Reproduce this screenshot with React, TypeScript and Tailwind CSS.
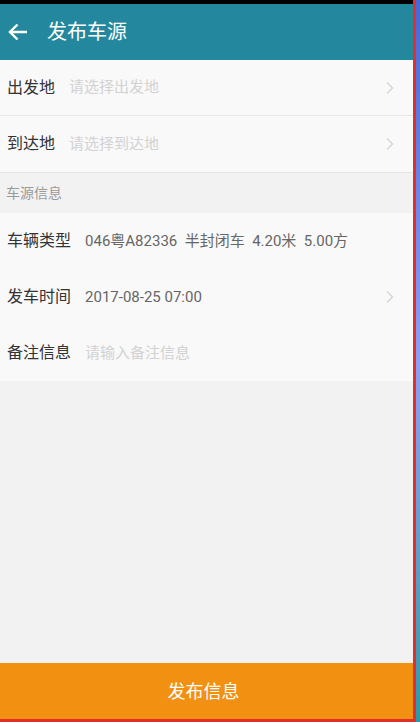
import React from "react";

const font = { fontFamily: 'Roboto, "Noto Sans CJK SC", "Noto Sans", sans-serif' };

function Chevron() {
  return (
    <svg width="10" height="14" viewBox="0 0 10 14" className="shrink-0">
      <path d="M2 1.5 L7.5 7 L2 12.5" fill="none" stroke="#d4d4d4" strokeWidth="1.4" />
    </svg>
  );
}

function Row({ label, value, placeholder, chevron, border }: { label: string; value?: string; placeholder?: string; chevron?: boolean; border?: boolean }) {
  return (
    <div className={`flex h-[56px] items-center bg-[#f9f9f9] pl-[7px] pr-[18px] ${border ? "border-b border-[#e6e6e6]" : ""}`}>
      <span className="text-[16px] text-[#333]">{label}</span>
      <span className={`ml-[14px] flex-1 whitespace-pre text-[15px] ${value ? "text-[#666]" : "text-[#d2d2d2]"}`}>{value ?? placeholder}</span>
      {chevron && <Chevron />}
    </div>
  );
}

export default function App() {
  return (
    <div className="flex h-[722px] w-[420px] overflow-hidden" style={font}>
      <div className="flex w-[416px] flex-col border-r-[3px] border-b-[3px] border-[#e1302a] bg-[#f2f2f2]">
        <div className="h-[4px] bg-black" />
        <div className="flex h-[56px] items-center bg-[#23889d] pl-[8px]">
          <svg width="20" height="18" viewBox="0 0 20 18">
            <path d="M19 9 H2 M9.5 1.5 L2 9 L9.5 16.5" fill="none" stroke="white" strokeWidth="2.4" />
          </svg>
          <span className="ml-[19px] text-[20px] text-white">发布车源</span>
        </div>
        <Row label="出发地" placeholder="请选择出发地" chevron border />
        <Row label="到达地" placeholder="请选择到达地" chevron />
        <div className="flex h-[41px] items-center border-t border-[#e6e6e6] bg-[#f2f2f2] pl-[6px] text-[14px] text-[#9a9a9a]">车源信息</div>
        <Row label="车辆类型" value="046粤A82336  半封闭车  4.20米  5.00方" />
        <Row label="发车时间" value="2017-08-25 07:00" chevron />
        <Row label="备注信息" placeholder="请输入备注信息" />
        <div className="flex-1" />
        <div className="flex h-[56px] items-center justify-center bg-[#f29111] pr-[6px] text-[18px] text-white">发布信息</div>
      </div>
      <div className="flex-1 bg-gradient-to-b from-[#4568d8] via-[#8d9ef6] to-[#2a9aa6]" />
    </div>
  );
}
